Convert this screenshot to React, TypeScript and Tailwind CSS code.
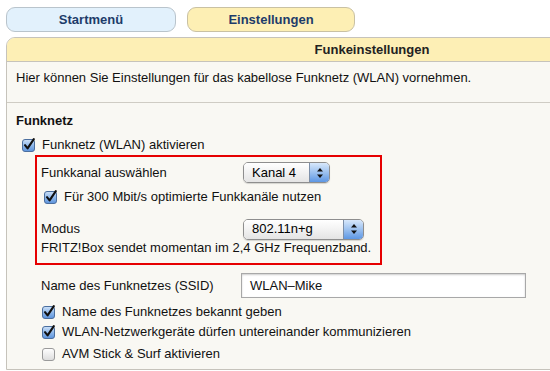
import React from "react";

function Check({ checked }: { checked: boolean }) {
  if (!checked) {
    return (
      <svg width="14" height="14" viewBox="0 0 14 14" className="shrink-0">
        <defs>
          <linearGradient id="ug" x1="0" y1="0" x2="0" y2="1">
            <stop offset="0" stopColor="#ffffff" />
            <stop offset="1" stopColor="#dcdcdc" />
          </linearGradient>
        </defs>
        <rect x="0.5" y="1.5" width="12" height="12" rx="2.5" fill="url(#ug)" stroke="#9a9a9a" />
      </svg>
    );
  }
  return (
    <svg width="14" height="14" viewBox="0 0 14 14" className="shrink-0">
      <defs>
        <linearGradient id="cg" x1="0" y1="0" x2="0" y2="1">
          <stop offset="0" stopColor="#cfe2f8" />
          <stop offset="0.5" stopColor="#8fb8ea" />
          <stop offset="1" stopColor="#5c93dc" />
        </linearGradient>
      </defs>
      <rect x="0.5" y="1.5" width="12" height="12" rx="2.5" fill="url(#cg)" stroke="#4c6f9e" />
      <path d="M3 7.2 L5.6 10.4 L11.8 1.2" fill="none" stroke="#111" strokeWidth="2.1" strokeLinecap="round" strokeLinejoin="round" />
    </svg>
  );
}

function Select({ value, width }: { value: string; width: string }) {
  return (
    <div
      className={`flex h-[21px] ${width} rounded-[5px] border border-[#8e8e8e] overflow-hidden shadow-[0_1px_1px_rgba(0,0,0,0.15)]`}
    >
      <div className="flex-1 flex items-center pl-[8px] bg-[linear-gradient(#ffffff,#f2f2f2_50%,#e4e4e4)] text-[13px] text-black">
        {value}
      </div>
      <div className="w-[20px] border-l border-[#7d8fa8] flex items-center justify-center bg-[linear-gradient(#d8e8fb,#9cc1ef_50%,#5d97e4)]">
        <svg width="8" height="12" viewBox="0 0 8 12">
          <path d="M4 1 L7 4.5 L1 4.5 Z" fill="#111" />
          <path d="M4 11 L7 7.5 L1 7.5 Z" fill="#111" />
        </svg>
      </div>
    </div>
  );
}

function CheckRow({ checked, label, className = "" }: { checked: boolean; label: string; className?: string }) {
  return (
    <div className={`flex items-center h-[16px] ${className}`}>
      <Check checked={checked} />
      <span className="ml-[6px] leading-[16px]">{label}</span>
    </div>
  );
}

export default function App() {
  return (
    <div className="w-[550px] h-[371px] overflow-hidden bg-white font-['Liberation_Sans',Arial,sans-serif] text-[13px] text-[#111]">
      <div className="flex gap-[11px] pl-[6px] pt-[7px]">
        <div className="w-[170px] h-[25px] rounded-[9px] border border-[#b9c4cc] bg-[#e2f1fc] flex items-center justify-center font-bold text-[#1d3c6a]">
          Startmenü
        </div>
        <div className="w-[168px] h-[25px] rounded-[9px] border border-[#c9c1a3] bg-[#fdefb4] flex items-center justify-center font-bold text-[#1d3c6a]">
          Einstellungen
        </div>
      </div>
      <div className="ml-[6px] mt-[5px] w-[732px] h-[333px] rounded-t-[9px] border border-[#c6c3bb] bg-[#f9f8f3] overflow-hidden">
        <div className="h-[24px] bg-[#fdefb5] border-b border-[#c6c3bb] flex items-center justify-center font-bold text-[#222]">
          Funkeinstellungen
        </div>
        <div className="h-[41px] border-b border-[#cfccc4] pl-[9px] pt-[8px] leading-[16px]">
          Hier können Sie Einstellungen für das kabellose Funknetz (WLAN) vornehmen.
        </div>
        <div className="pl-[9px] pt-[10px]">
          <div className="font-bold leading-[16px]">Funknetz</div>
          <CheckRow checked label="Funknetz (WLAN) aktivieren" className="mt-[8px] ml-[6px]" />
          <div className="mt-[2px] ml-[19px] w-[347px] border-2 border-[#e60000] pl-[4px] pt-[5px] pb-[7px]">
            <div className="flex items-center h-[21px]">
              <span className="w-[202px]">Funkkanal auswählen</span>
              <Select value="Kanal 4" width="w-[87px]" />
            </div>
            <CheckRow checked label="Für 300 Mbit/s optimierte Funkkanäle nutzen" className="mt-[6px] ml-[4px] !ml-[3px]" />
            <div className="flex items-center h-[22px] mt-[13px]">
              <span className="w-[202px]">Modus</span>
              <Select value="802.11n+g" width="w-[121px]" />
            </div>
            <div className="leading-[16px]">FRITZ!Box sendet momentan im 2,4 GHz Frequenzband.</div>
          </div>
          <div className="flex items-center mt-[8px] ml-[25px] h-[25px]">
            <span className="w-[200px]">Name des Funknetzes (SSID)</span>
            <div className="w-[285px] h-[25px] border border-[#a8a8a8] bg-white shadow-[inset_0_1px_2px_rgba(0,0,0,0.2)] flex items-center pl-[8px] text-[13px]">
              WLAN–Mike
            </div>
          </div>
          <CheckRow checked label="Name des Funknetzes bekannt geben" className="mt-[6px] ml-[26px]" />
          <CheckRow checked label="WLAN-Netzwerkgeräte dürfen untereinander kommunizieren" className="mt-[4px] ml-[26px]" />
          <CheckRow checked={false} label="AVM Stick & Surf aktivieren" className="mt-[6px] ml-[26px]" />
        </div>
      </div>
    </div>
  );
}
